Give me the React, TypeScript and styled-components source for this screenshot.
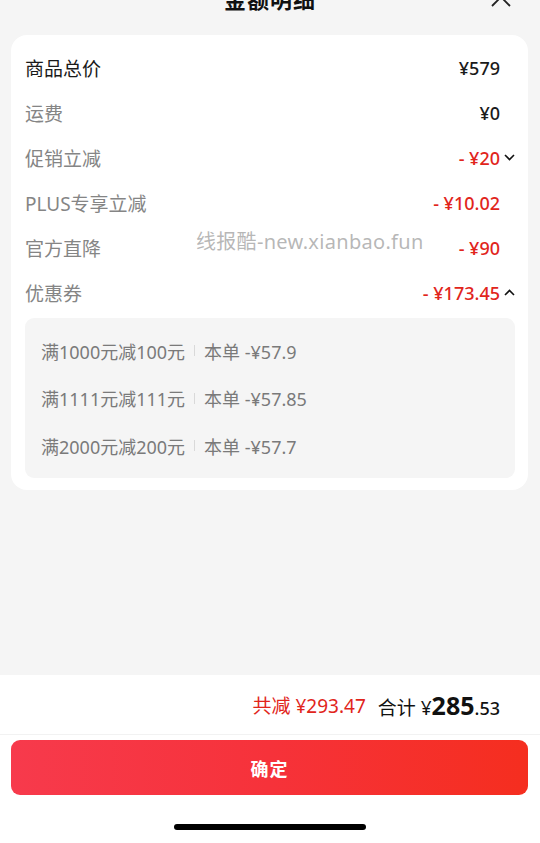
import React from "react";
import styled, { createGlobalStyle } from "styled-components";

const Global = createGlobalStyle`
  html, body { margin: 0; padding: 0; background: #f5f5f5; }
  body { font-family: "Noto Sans", "Noto Sans CJK SC", sans-serif; }
  * { box-sizing: border-box; }
`;

const Page = styled.div`
  height: 843px;
  display: flex;
  flex-direction: column;
  background: #f5f5f5;
  position: relative;
  overflow: hidden;
`;

const Header = styled.div`
  height: 35px;
  display: grid;
  grid-template-columns: 1fr auto 1fr;
  align-items: start;
`;

const Title = styled.div`
  grid-column: 2;
  font-family: "Noto Sans CJK SC", sans-serif;
  font-size: 22px;
  font-weight: 700;
  color: #111;
  line-height: 30px;
  margin-top: -17px;
  letter-spacing: 1px;
`;

const Close = styled.div`
  grid-column: 3;
  justify-self: end;
  margin-right: 28px;
  margin-top: -14px;
  width: 22px;
  height: 22px;
  display: flex;
`;

const Card = styled.div`
  margin: 0 12px 0 11px;
  background: #fff;
  border-radius: 16px;
  padding: 10px 13px 12px 14px;
  display: flex;
  flex-direction: column;
`;

const Row = styled.div`
  height: 45px;
  display: flex;
  align-items: center;
`;

const Label = styled.div<{ $strong?: boolean }>`
  flex: 1;
  font-size: 19px;
  color: ${(p) => (p.$strong ? "#1a1a1a" : "#858585")};
`;

const Amount = styled.div<{ $red?: boolean }>`
  font-family: "Noto Sans", sans-serif;
  font-size: 18px;
  font-weight: 500;
  color: ${(p) => (p.$red ? "#e1251b" : "#1a1a1a")};
  white-space: pre;
`;

const ArrowSlot = styled.div`
  width: 15px;
  display: flex;
  justify-content: flex-end;
  align-items: center;
`;

const CouponBox = styled.div`
  margin-top: 3px;
  background: #f5f5f5;
  border-radius: 9px;
  padding: 9px 16px 8px;
  display: flex;
  flex-direction: column;
`;

const CouponItem = styled.div`
  height: 47.5px;
  display: flex;
  align-items: center;
  font-size: 18px;
  color: #7a7a7a;
  white-space: pre;
`;

const Divider = styled.span`
  display: inline-block;
  width: 1px;
  height: 11px;
  background: #d9d9d9;
  margin: 0 9px;
`;

const Spacer = styled.div`
  flex: 1;
`;

const Footer = styled.div`
  background: #fff;
  height: 168px;
  display: flex;
  flex-direction: column;
`;

const Summary = styled.div`
  height: 60px;
  display: flex;
  align-items: center;
  justify-content: flex-end;
  padding-right: 40px;
  border-bottom: 1px solid #f2f2f2;
  gap: 12px;
`;

const Saved = styled.div`
  color: #e1251b;
  font-size: 19px;
  white-space: pre;
`;

const Total = styled.div`
  color: #111;
  font-size: 19px;
  display: flex;
  align-items: baseline;
  white-space: pre;
`;

const Big = styled.span`
  font-size: 25px;
  font-weight: 700;
`;

const Small = styled.span`
  font-size: 18px;
  font-weight: 500;
`;

const Button = styled.div`
  margin: 5px 12px 0 11px;
  height: 55px;
  border-radius: 9px;
  background: linear-gradient(90deg, #f73a4c 0%, #f6323a 50%, #f52e1f 100%);
  display: flex;
  align-items: center;
  justify-content: center;
  color: #fff;
  font-family: "Noto Sans CJK SC", sans-serif;
  font-size: 18px;
  font-weight: 700;
  letter-spacing: 1px;
`;

const Indicator = styled.div`
  margin: 29px auto 0;
  width: 192px;
  height: 6px;
  border-radius: 3px;
  background: #000;
`;

const Watermark = styled.div`
  position: absolute;
  left: 196px;
  top: 226px;
  font-size: 20px;
  letter-spacing: 0.3px;
  color: rgba(160, 160, 160, 0.75);
  pointer-events: none;
  white-space: nowrap;
`;

const Chevron = ({ up }: { up?: boolean }) => (
  <svg width="11" height="7" viewBox="0 0 11 7">
    <path
      d={up ? "M1 6 L5.5 1.5 L10 6" : "M1 1 L5.5 5.5 L10 1"}
      fill="none"
      stroke="#111"
      strokeWidth="1.6"
    />
  </svg>
);

const rows: { label: string; amount: string; red?: boolean; strong?: boolean; arrow?: "up" | "down" }[] = [
  { label: "商品总价", amount: "¥579", strong: true },
  { label: "运费", amount: "¥0" },
  { label: "促销立减", amount: "- ¥20", red: true, arrow: "down" },
  { label: "PLUS专享立减", amount: "- ¥10.02", red: true },
  { label: "官方直降", amount: "- ¥90", red: true },
  { label: "优惠券", amount: "- ¥173.45", red: true, arrow: "up" },
];

const coupons = [
  { rule: "满1000元减100元", amt: "本单 -¥57.9" },
  { rule: "满1111元减111元", amt: "本单 -¥57.85" },
  { rule: "满2000元减200元", amt: "本单 -¥57.7" },
];

export default function App() {
  return (
    <Page>
      <Global />
      <Header>
        <Title>金额明细</Title>
        <Close>
          <svg width="22" height="22" viewBox="0 0 22 22">
            <path d="M2 2 L20 20 M20 2 L2 20" stroke="#222" strokeWidth="1.8" fill="none" />
          </svg>
        </Close>
      </Header>
      <Card>
        {rows.map((r) => (
          <Row key={r.label}>
            <Label $strong={r.strong}>{r.label}</Label>
            <Amount $red={r.red}>{r.amount}</Amount>
            <ArrowSlot>{r.arrow && <Chevron up={r.arrow === "up"} />}</ArrowSlot>
          </Row>
        ))}
        <CouponBox>
          {coupons.map((c) => (
            <CouponItem key={c.rule}>
              {c.rule}
              <Divider />
              {c.amt}
            </CouponItem>
          ))}
        </CouponBox>
      </Card>
      <Spacer />
      <Footer>
        <Summary>
          <Saved>共减 ¥293.47</Saved>
          <Total>
            合计 ¥<Big>285</Big>
            <Small>.53</Small>
          </Total>
        </Summary>
        <Button>确定</Button>
        <Indicator />
      </Footer>
      <Watermark>线报酷-new.xianbao.fun</Watermark>
    </Page>
  );
}
